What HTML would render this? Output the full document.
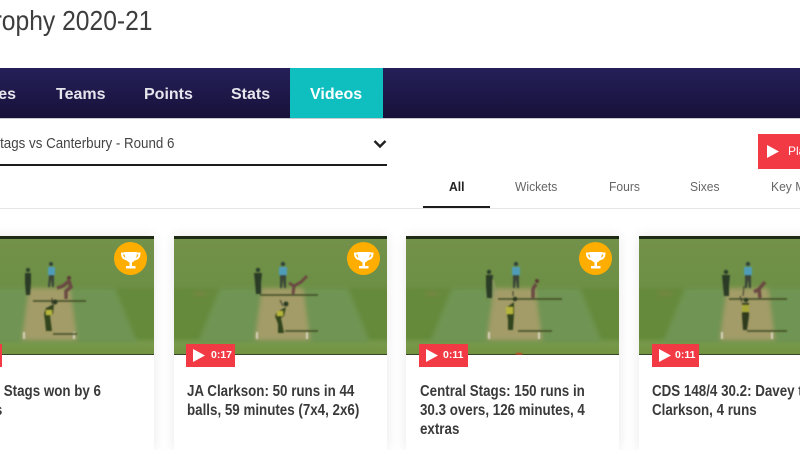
<!DOCTYPE html>
<html><head><meta charset="utf-8">
<style>
html,body{margin:0;padding:0;background:#fff;width:800px;height:450px;overflow:hidden;}
#w{position:relative;width:800px;height:450px;overflow:hidden;font-family:"Liberation Sans",sans-serif;background:#fff;}
.a{position:absolute;white-space:nowrap;}
.c{transform:scaleX(.93);transform-origin:0 50%;}
.card{position:absolute;top:236px;width:213px;height:214px;background:#fff;box-shadow:0 0 12px rgba(0,0,0,.09);}
.card svg.th{position:absolute;left:0;top:0;width:213px;height:119px;display:block;}
.tro{position:absolute;left:173px;top:6px;width:33px;height:33px;}
.bd{position:absolute;left:12px;top:108px;width:49px;height:23px;background:#f23a45;}
.bd svg{position:absolute;left:7px;top:5px;width:12px;height:13px;}
.bd span{position:absolute;left:25px;top:5px;font:bold 10.500px/13px "Liberation Sans",sans-serif;color:#fff;}
.tt{position:absolute;left:13px;top:146px;font:bold 16px/19px "Liberation Sans",sans-serif;color:#3a3a3a;white-space:nowrap;transform:scaleX(.835);transform-origin:0 0;}
.nav{font:bold 16px/18px "Liberation Sans",sans-serif;color:#e6e4ec;top:86px;}
.tab{font:13px/15px "Liberation Sans",sans-serif;color:#666;top:179px;}
</style></head><body><div id="w">
<svg width="0" height="0" style="position:absolute"><defs>
<filter id="b" x="-20%" y="-20%" width="140%" height="140%"><feGaussianBlur stdDeviation=".7"/></filter>
<filter id="b2" x="-20%" y="-20%" width="140%" height="140%"><feGaussianBlur stdDeviation="2"/></filter>
<linearGradient id="g" x1="0" y1="0" x2="0" y2="1"><stop offset="0" stop-color="#73914a"/><stop offset=".42" stop-color="#6d8f45"/><stop offset=".46" stop-color="#668a3c"/><stop offset=".85" stop-color="#658a3a"/><stop offset=".9" stop-color="#76984a"/><stop offset="1" stop-color="#72943f"/></linearGradient>
<symbol id="field" viewBox="0 0 213 119">
<rect width="213" height="119" fill="url(#g)"/>
<g filter="url(#b2)">
<polygon points="46,52 174,52 196,106 24,106" fill="#6f9452"/>
<polygon points="88,52 129,52 136,104 81,104" fill="#a39c68"/>
<rect x="20" y="56" width="12" height="3" fill="#84804a" opacity=".7"/>
</g>
<rect width="213" height="3" fill="#1f2a14"/>
<rect y="118" width="213" height="1" fill="#3a4428"/>
<g filter="url(#b)"><rect x="82" y="96" width="2" height="7" fill="#d8d4c0"/><rect x="132" y="96" width="2" height="7" fill="#d8d4c0"/></g>
</symbol>
<symbol id="trophy" viewBox="0 0 33 33">
<circle cx="16.500" cy="16.500" r="16.500" fill="#ffae00"/>
<path d="M10.500 10H23C23 15 21.500 19 18 20.500V24H21.500V26.500H12V24H15.500V20.500C12 19 10.500 15 10.500 10Z" fill="#fff"/>
<path d="M11 11.500H8C8 15 10 17 13 17.500M22.500 11.500H25.500C25.500 15 23.500 17 20.500 17.500" fill="none" stroke="#fff" stroke-width="2"/>
</symbol>
<symbol id="pl" viewBox="0 0 12 13"><polygon points="0,0 12,6.500 0,13" fill="#fff"/></symbol>
</defs></svg>

<div class="a" style="right:647px;top:4px;font-size:28px;line-height:34px;color:#3d3d3d;transform:scaleX(.88);transform-origin:100% 50%;">The Ford Trophy 2020-21</div>

<div class="a" style="left:0;top:68px;width:800px;height:50px;background:linear-gradient(#252058,#17113a);border-bottom:1px solid #c9c9d0;"></div>
<div class="a" style="left:290px;top:68px;width:93px;height:50px;background:#0fbfbf;"></div>
<div class="a nav" style="right:784px;">Matches</div>
<div class="a nav" style="left:56px;">Teams</div>
<div class="a nav" style="left:144px;">Points</div>
<div class="a nav" style="left:231px;">Stats</div>
<div class="a nav" style="left:310px;color:#fff;">Videos</div>

<div class="a" style="right:626px;top:135px;font-size:15px;line-height:18px;color:#444;transform:scaleX(.89);transform-origin:100% 50%;">Central Stags vs Canterbury - Round 6</div>
<svg class="a" style="left:373px;top:139px" width="14" height="10" viewBox="0 0 14 10"><path d="M1.500 2L7 7.500L12.500 2" fill="none" stroke="#222" stroke-width="2.400"/></svg>
<div class="a" style="left:0;top:164px;width:387px;height:2px;background:#1c1c1c;"></div>

<div class="a" style="left:758px;top:134px;width:42px;height:35px;background:#f23a45;"></div>
<svg class="a" style="left:767px;top:145px" width="12" height="13" viewBox="0 0 12 13"><polygon points="0,0 12,6.500 0,13" fill="#fff"/></svg>
<div class="a" style="left:788px;top:144px;font:12px/15px 'Liberation Sans',sans-serif;color:#fff;">Play</div>

<div class="a" style="left:0;top:208px;width:800px;height:1px;background:#e6e6e6;"></div>
<div class="a" style="left:423px;top:206px;width:67px;height:2px;background:#1c1c1c;"></div>
<div class="a tab c" style="left:449px;color:#222;font-weight:bold;">All</div>
<div class="a tab c" style="left:515px;">Wickets</div>
<div class="a tab c" style="left:609px;">Fours</div>
<div class="a tab c" style="left:690px;">Sixes</div>
<div class="a tab c" style="left:771px;width:29px;overflow:hidden;transform:none;"><span style="display:inline-block;transform:scaleX(.93);transform-origin:0 50%;">Key Moments</span></div>

<!-- card 1 -->
<div class="card" style="left:-59px;">
<svg class="th" viewBox="0 0 213 119"><use href="#field" width="213" height="119"/>
<g filter="url(#b)">
<path d="M92 65H145M112 98H136" stroke="#3c4a25" stroke-width="1.500" fill="none"/>
<circle cx="87" cy="34" r="2" fill="#2c3f2a"/><path d="M84 37H90L90 47L89 59H85L84 47Z" fill="#2a3b28"/>
<circle cx="110" cy="28" r="2" fill="#33443a"/><rect x="107" y="31" width="7" height="8" fill="#4f9cb8"/><path d="M108 39H113L113 51H111L110 43L109 51H107Z" fill="#3a4438"/>
<circle cx="128" cy="42" r="2" fill="#5a3a30"/><path d="M116 52L122 50L128 45L130 51L125 55L125 63" stroke="#6a4a42" stroke-width="3.500" fill="none"/>
<circle cx="114" cy="66" r="2.500" fill="#2c3a20"/><path d="M105 72L113 68L112 78L109 80L111 95H105L104 85L103 78Z" fill="#33451f"/><rect x="105" y="74" width="6" height="5" fill="#b5b53a"/><path d="M111 62V68" stroke="#3a3a2a"/>
</g></svg>
<svg class="tro"><use href="#trophy" width="33" height="33"/></svg>
<div class="bd"><svg><use href="#pl" width="12" height="13"/></svg><span>0:13</span></div>
<div class="tt">Central Stags won by 6<br>wickets</div>
</div>

<!-- card 2 -->
<div class="card" style="left:174px;">
<svg class="th" viewBox="0 0 213 119"><use href="#field" width="213" height="119"/>
<g filter="url(#b)">
<path d="M86 59H144M111 95H144" stroke="#3c4a25" stroke-width="1.500" fill="none"/>
<circle cx="84" cy="34" r="2.200" fill="#2c3f2a"/><path d="M80 37H88L87 47L87 58H82L81 47Z" fill="#2a3b28"/>
<circle cx="109" cy="28" r="2.200" fill="#33443a"/><rect x="105" y="31" width="8" height="8" fill="#4f9cb8"/><path d="M106 39H112L112 52H110L109 43L108 52H106Z" fill="#3a4438"/>
<path d="M119 58L120 50L115 47M120 50L127 46L133 40" stroke="#6a4a42" stroke-width="3" fill="none"/>
<circle cx="112" cy="68" r="2.500" fill="#2c3a20"/><path d="M103 76L112 71L110 80L107 82L110 97H104L104 88L101 80Z" fill="#33451f"/><rect x="103" y="75" width="6" height="5" fill="#b5b53a"/><path d="M109 70L106 64" stroke="#3a3a2a"/>
</g></svg>
<svg class="tro"><use href="#trophy" width="33" height="33"/></svg>
<div class="bd"><svg><use href="#pl" width="12" height="13"/></svg><span>0:17</span></div>
<div class="tt">JA Clarkson: 50 runs in 44<br>balls, 59 minutes (7x4, 2x6)</div>
</div>

<!-- card 3 -->
<div class="card" style="left:406px;">
<svg class="th" viewBox="0 0 213 119"><use href="#field" width="213" height="119"/>
<g filter="url(#b)">
<path d="M92 63H156M112 95H146" stroke="#3c4a25" stroke-width="1.500" fill="none"/>
<circle cx="83" cy="36" r="2.200" fill="#2c3f2a"/><path d="M80 39H87L86 50L86 62H81L80 50Z" fill="#2a3b28"/><path d="M87 44L91 60" stroke="#9a9a70" stroke-width="1.200"/>
<circle cx="110" cy="28" r="2.200" fill="#33443a"/><rect x="106" y="31" width="8" height="8" fill="#4f9cb8"/><path d="M107 39H113L113 52H111L110 43L109 52H107Z" fill="#3a4438"/>
<circle cx="131" cy="45" r="2" fill="#5a3a30"/><path d="M127 62L127 53L130 48" stroke="#6a4a42" stroke-width="3.500" fill="none"/>
<circle cx="109" cy="63" r="2.300" fill="#2c3a20"/><path d="M100 72L108 66L108 78L107 94H102L102 84Z" fill="#33451f"/><rect x="100" y="71" width="7" height="7" fill="#b5b53a"/><path d="M107 60V55" stroke="#3a3a2a"/>
<rect x="110" y="117" width="6" height="2" fill="#c8402a"/>
</g></svg>
<svg class="tro"><use href="#trophy" width="33" height="33"/></svg>
<div class="bd" style="left:13px;"><svg><use href="#pl" width="12" height="13"/></svg><span style="left:24px">0:11</span></div>
<div class="tt" style="left:14px;">Central Stags: 150 runs in<br>30.3 overs, 126 minutes, 4<br>extras</div>
</div>

<!-- card 4 -->
<div class="card" style="left:639px;">
<svg class="th" viewBox="0 0 213 119"><use href="#field" width="213" height="119"/>
<g filter="url(#b)">
<path d="M90 63H148M108 95H148" stroke="#3c4a25" stroke-width="1.500" fill="none"/>
<circle cx="87" cy="36" r="2.200" fill="#2c3f2a"/><path d="M83 39H91L90 50L90 60H85L84 50Z" fill="#2a3b28"/>
<circle cx="109" cy="28" r="2.200" fill="#33443a"/><rect x="105" y="31" width="8" height="8" fill="#4f9cb8"/><path d="M106 39H112L112 52H110L109 43L108 52H106Z" fill="#3a4438"/>
<path d="M121 62L120 53L115 56M120 53L126 46" stroke="#6a4a42" stroke-width="3.500" fill="none"/>
<circle cx="107" cy="64" r="2.300" fill="#2c3a20"/><path d="M103 67H110L110 80L108 94H104L103 80Z" fill="#2e3a1e"/><rect x="103" y="69" width="7" height="7" fill="#a5a838"/><path d="M103 66L101 60M104 60L105 50" stroke="#3a3a2a"/>
</g></svg>
<div class="bd" style="left:13px;width:47px;"><svg><use href="#pl" width="12" height="13"/></svg><span style="left:23px">0:11</span></div>
<div class="tt">CDS 148/4 30.2: Davey to<br>Clarkson, 4 runs</div>
</div>
</div></body></html>
